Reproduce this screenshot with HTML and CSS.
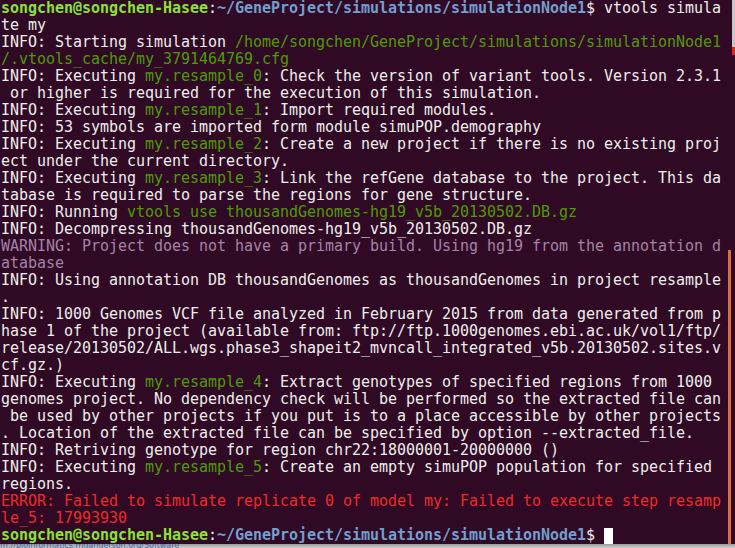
FILE: index.html
```html
<!DOCTYPE html>
<html>
<head>
<meta charset="utf-8">
<link rel="stylesheet" href="styles.css">
</head>
<body>
<div class="term">
  <div class="screen">
<div class="ln"><span class="pu">songchen@songchen-Hasee</span>:<span class="pp">~/GeneProject/simulations/simulationNode1</span>$ vtools simula</div>
<div class="ln">te my</div>
<div class="ln">INFO: Starting simulation <span class="g">/home/songchen/GeneProject/simulations/simulationNode1</span></div>
<div class="ln"><span class="g">/.vtools_cache/my_3791464769.cfg</span></div>
<div class="ln">INFO: Executing <span class="g">my.resample_0</span>: Check the version of variant tools. Version 2.3.1</div>
<div class="ln"> or higher is required for the execution of this simulation.</div>
<div class="ln">INFO: Executing <span class="g">my.resample_1</span>: Import required modules.</div>
<div class="ln">INFO: 53 symbols are imported form module simuPOP.demography</div>
<div class="ln">INFO: Executing <span class="g">my.resample_2</span>: Create a new project if there is no existing proj</div>
<div class="ln">ect under the current directory.</div>
<div class="ln">INFO: Executing <span class="g">my.resample_3</span>: Link the refGene database to the project. This da</div>
<div class="ln">tabase is required to parse the regions for gene structure.</div>
<div class="ln">INFO: Running <span class="g">vtools use thousandGenomes-hg19_v5b_20130502.DB.gz</span></div>
<div class="ln">INFO: Decompressing thousandGenomes-hg19_v5b_20130502.DB.gz</div>
<div class="ln w">WARNING: Project does not have a primary build. Using hg19 from the annotation d</div>
<div class="ln w">atabase</div>
<div class="ln">INFO: Using annotation DB thousandGenomes as thousandGenomes in project resample</div>
<div class="ln">.</div>
<div class="ln">INFO: 1000 Genomes VCF file analyzed in February 2015 from data generated from p</div>
<div class="ln">hase 1 of the project (available from: ftp://ftp.1000genomes.ebi.ac.uk/vol1/ftp/</div>
<div class="ln">release/20130502/ALL.wgs.phase3_shapeit2_mvncall_integrated_v5b.20130502.sites.v</div>
<div class="ln">cf.gz.)</div>
<div class="ln">INFO: Executing <span class="g">my.resample_4</span>: Extract genotypes of specified regions from 1000</div>
<div class="ln">genomes project. No dependency check will be performed so the extracted file can</div>
<div class="ln"> be used by other projects if you put is to a place accessible by other projects</div>
<div class="ln">. Location of the extracted file can be specified by option --extracted_file.</div>
<div class="ln">INFO: Retriving genotype for region chr22:18000001-20000000 ()</div>
<div class="ln">INFO: Executing <span class="g">my.resample_5</span>: Create an empty simuPOP population for specified</div>
<div class="ln">regions.</div>
<div class="ln e">ERROR: Failed to simulate replicate 0 of model my: Failed to execute step resamp</div>
<div class="ln e">le_5: 17993930</div>
<div class="ln"><span class="pu">songchen@songchen-Hasee</span>:<span class="pp">~/GeneProject/simulations/simulationNode1</span>$ <span class="cur"></span></div>
  </div>
  <div class="edge"><div class="edge-top"></div><div class="edge-mark"></div></div>
  <div class="scroll"></div>
</div>
<div class="below"><span>m://bioinformatics.mdanderson.org/Software</span></div>
</body>
</html>
```

FILE: styles.css
```css
html, body {
  margin: 0;
  padding: 0;
  background: #300a24;
  width: 735px;
  height: 548px;
  overflow: hidden;
}
.term {
  position: relative;
  height: 544px;
  display: flex;
  background: #300a24;
}
.screen {
  flex: 1;
  padding: 0 0 0 1px;
  font-family: "DejaVu Sans Mono", "Liberation Mono", monospace;
  font-size: 15px;
  letter-spacing: -0.03px;
  line-height: 17px;
  color: #eeeeec;
  overflow: hidden;
}
.ln {
  height: 17px;
  white-space: pre;
}
.pu { color: #8ae234; font-weight: bold; }
.pp { color: #729fcf; font-weight: bold; }
.g { color: #4e9a06; }
.w { color: #a383a6; }
.e { color: #ef2929; }
.cur {
  display: inline-block;
  width: 9px;
  height: 16px;
  background: #ffffff;
  vertical-align: -4px;
}
.edge {
  width: 3px;
  display: flex;
  flex-direction: column;
}
.edge-top {
  height: 47px;
  background: #c9c4c6;
}
.edge-mark {
  height: 8px;
  background: #d42a1e;
}
.scroll {
  position: absolute;
  right: 4px;
  top: 250px;
  width: 3px;
  height: 294px;
  background: #d9703e;
}
.below {
  height: 4px;
  background: linear-gradient(#9a9a9a, #cfcfcf);
  overflow: hidden;
  font-family: "DejaVu Sans", sans-serif;
  font-size: 8px;
  line-height: 4px;
  color: #3a6aa8;
  white-space: pre;
}
.below span {
  display: block;
}
```
